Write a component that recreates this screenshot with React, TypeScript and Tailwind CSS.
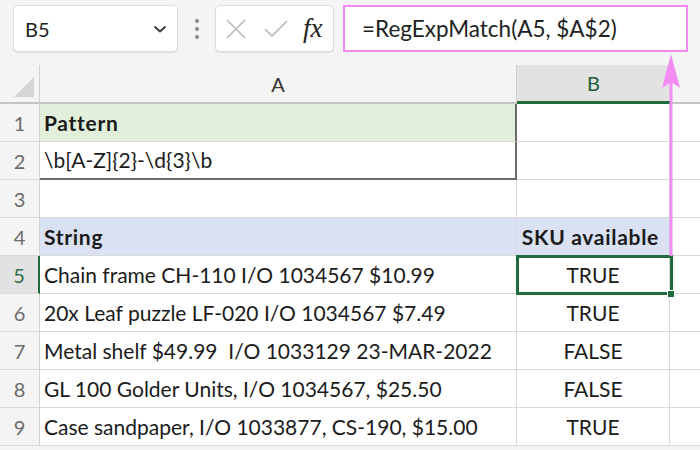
import React from "react";

const rows: { n: number; a: string; b: string }[] = [
  { n: 1, a: "Pattern", b: "" },
  { n: 2, a: "\\b[A-Z]{2}-\\d{3}\\b", b: "" },
  { n: 3, a: "", b: "" },
  { n: 4, a: "String", b: "SKU available" },
  { n: 5, a: "Chain frame CH-110 I/O 1034567 $10.99", b: "TRUE" },
  { n: 6, a: "20x Leaf puzzle LF-020 I/O 1034567 $7.49", b: "TRUE" },
  { n: 7, a: "Metal shelf $49.99  I/O 1033129 23-MAR-2022", b: "FALSE" },
  { n: 8, a: "GL 100 Golder Units, I/O 1034567, $25.50", b: "FALSE" },
  { n: 9, a: "Case sandpaper, I/O 1033877, CS-190, $15.00", b: "TRUE" },
];

export default function App() {
  return (
    <div
      className="relative w-[700px] h-[450px] overflow-hidden bg-[#f4f4f4] text-[#1b1b1b]"
      style={{ fontFamily: "Lato, 'Open Sans', sans-serif" }}
    >
      {/* Toolbar */}
      <div className="flex items-center h-[47px] mt-[5px] pl-[13px]">
        <div className="flex items-center justify-between w-[165px] h-[47px] bg-white border border-[#dcdcdc] rounded-[5px] shadow-[0_1px_1px_rgba(0,0,0,0.08)] pl-[11px] pr-[10px]">
          <span className="text-[20px] text-[#222]">B5</span>
          <svg width="14" height="10" viewBox="0 0 14 10">
            <path d="M2 3 L7 7.5 L12 3" fill="none" stroke="#333" strokeWidth="1.8" strokeLinecap="round" strokeLinejoin="round" />
          </svg>
        </div>
        <div className="w-[37px] flex flex-col items-center gap-[4px]">
          <span className="w-[4px] h-[4px] rounded-full bg-[#8a8a8a]" />
          <span className="w-[4px] h-[4px] rounded-full bg-[#8a8a8a]" />
          <span className="w-[4px] h-[4px] rounded-full bg-[#8a8a8a]" />
        </div>
        <div className="flex items-center w-[119px] h-[47px] bg-white border border-[#dcdcdc] rounded-[5px] shadow-[0_1px_1px_rgba(0,0,0,0.08)] pl-[9px]">
          <svg width="22" height="22" viewBox="0 0 22 22">
            <path d="M2 2 L20 20 M20 2 L2 20" stroke="#b8b8b8" strokeWidth="1.6" />
          </svg>
          <svg width="26" height="20" viewBox="0 0 26 20" className="ml-[16px]">
            <path d="M2 10 L9 17 L24 2" fill="none" stroke="#b8b8b8" strokeWidth="1.6" />
          </svg>
          <span
            className="ml-[14px] text-[27px] italic text-[#222] leading-none"
            style={{ fontFamily: "'Liberation Serif', 'DejaVu Serif', serif" }}
          >
            fx
          </span>
        </div>
        <div className="ml-[9px] flex items-center w-[345px] h-[47px] bg-white border-[2px] border-[#f28af2] pl-[17px]">
          <span className="text-[22.5px] text-[#222]">=RegExpMatch(A5, $A$2)</span>
        </div>
      </div>

      {/* Grid */}
      <div className="mt-[13px]">
        {/* header row */}
        <div className="flex h-[39px]">
          <div className="w-[40px] h-full border-r border-[#d0d0d0] border-b-2 border-b-[#c4c4c4] flex items-end justify-end pb-[5px] pr-[5px]">
            <svg width="20" height="20" viewBox="0 0 20 20">
              <path d="M20 0 L20 20 L0 20 Z" fill="#d6d6d6" />
            </svg>
          </div>
          <div className="w-[477px] h-full border-r border-[#d0d0d0] border-b-2 border-b-[#c4c4c4] flex items-center justify-center text-[20px] text-[#333]">
            A
          </div>
          <div className="w-[153px] h-full bg-[#e2e2e2] border-b-[3px] border-b-[#1f6b3d] flex items-center justify-center text-[20px] text-[#1f5e38]">
            B
          </div>
          <div className="w-[30px] h-full border-b-2 border-b-[#c4c4c4]" />
        </div>

        {rows.map((r) => {
          const sel = r.n === 5;
          const aBg = r.n === 1 ? "bg-[#e2efda]" : r.n === 4 ? "bg-[#d9e1f2]" : "bg-white";
          const bBg = r.n === 4 ? "bg-[#d9e1f2]" : "bg-white";
          const bold = r.n === 1 || r.n === 4;
          const aBorder =
            r.n === 1
              ? "border-r-2 border-r-[#6a6a6a] border-b border-b-[#dadada]"
              : r.n === 2
              ? "border-r-2 border-r-[#6a6a6a] border-b-2 border-b-[#6a6a6a]"
              : "border-r border-r-[#dadada] border-b border-b-[#dadada]";
          return (
            <div key={r.n} className="flex h-[38px]">
              <div
                className={
                  "w-[40px] h-full flex items-center justify-center text-[20px] border-b border-b-[#dadada] " +
                  (sel
                    ? "bg-[#e2e2e2] text-[#2f6e48] border-r-2 border-r-[#1f6b3d]"
                    : "text-[#6b6b6b] border-r border-r-[#d0d0d0]")
                }
              >
                {r.n}
              </div>
              <div
                className={
                  "w-[477px] h-full flex items-center pl-[4px] text-[21px] whitespace-pre " +
                  aBg +
                  " " +
                  aBorder +
                  (bold ? " font-bold tracking-[0.7px]" : "")
                }
              >
                {r.a}
              </div>
              <div
                className={
                  "w-[153px] h-full flex items-center justify-center text-[21px] border-r border-r-[#dadada] border-b border-b-[#dadada] " +
                  bBg +
                  (bold ? " font-bold tracking-[0.7px] justify-end pr-[10px]" : "")
                }
              >
                {r.b}
              </div>
              <div className="w-[30px] h-full bg-white border-b border-b-[#dadada]" />
            </div>
          );
        })}
      </div>

      {/* selected cell outline */}
      <div className="absolute left-[516px] top-[255px] w-[157px] h-[40px] border-[3px] border-[#1f6b3d]" />
      <div className="absolute left-[667px] top-[290px] w-[8px] h-[8px] bg-[#1f6b3d] border border-white" />

      {/* pink arrow */}
      <svg className="absolute left-[660px] top-[53px]" width="22" height="203" viewBox="0 0 22 203">
        <path d="M11 20 L11 203" stroke="#f38cf3" strokeWidth="3" />
        <path d="M11 1 L2 35 L11 29 L20 35 Z" fill="#f38cf3" />
      </svg>
    </div>
  );
}
